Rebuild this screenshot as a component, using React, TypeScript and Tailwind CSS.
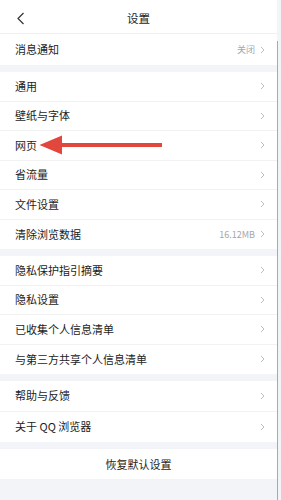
import React from 'react';

type Row = { label: string; value?: string };

const sections: Row[][] = [
  [{ label: '消息通知', value: '关闭' }],
  [
    { label: '通用' },
    { label: '壁纸与字体' },
    { label: '网页' },
    { label: '省流量' },
    { label: '文件设置' },
    { label: '清除浏览数据', value: '16.12MB' },
  ],
  [
    { label: '隐私保护指引摘要' },
    { label: '隐私设置' },
    { label: '已收集个人信息清单' },
    { label: '与第三方共享个人信息清单' },
  ],
  [{ label: '帮助与反馈' }, { label: '关于 QQ 浏览器' }],
];

const rowHeight = ['h-[31px]', 'h-[29.5px]', 'h-[29.5px]', 'h-[30.5px]'];

const Chevron = () => (
  <svg width="5" height="8" viewBox="0 0 5 8" fill="none" className="ml-[5px]">
    <path d="M1 1l3 3-3 3" stroke="#b5b5b5" strokeWidth="0.9" />
  </svg>
);

const Arrow = () => (
  <svg
    width="124"
    height="20"
    viewBox="0 0 124 20"
    className="absolute left-[39px] top-1/2 -translate-y-1/2"
  >
    <path d="M0.5 10L23 0.5v7.5h100v4H23v7.5z" fill="#e2473d" />
  </svg>
);

export default function App() {
  return (
    <div
      className="relative w-[281px] h-[500px] overflow-hidden bg-[#f3f4f8] text-[#1c1c1c]"
      style={{ fontFamily: '"Noto Sans CJK SC", "Noto Sans", sans-serif' }}
    >
      <div className="w-[277px]">
        <header className="relative h-[34px] pt-[4px] bg-white border-b border-[#eef0f3] flex items-center justify-center">
          <svg width="9" height="13" viewBox="0 0 9 13" fill="none" className="absolute left-[16px] top-[12px]">
            <path d="M7.5 1L2 6.5 7.5 12" stroke="#333" strokeWidth="1.2" />
          </svg>
          <span className="text-[11.5px] leading-none">设置</span>
        </header>

        <div className="flex flex-col gap-[7px]">
          {sections.map((rows, si) => (
            <div key={si} className="bg-white">
              {rows.map((row, ri) => (
                <div
                  key={row.label}
                  className={`relative flex items-center pl-[15px] pr-[12px] ${rowHeight[si]} ${
                    ri < rows.length - 1 ? 'border-b border-[#f1f2f4]' : ''
                  }`}
                >
                  <span className="text-[11px] flex-1 leading-none">{row.label}</span>
                  {row.value && <span className="text-[9px] text-[#a6a6a6] leading-none">{row.value}</span>}
                  <Chevron />
                  {row.label === '网页' && <Arrow />}
                </div>
              ))}
            </div>
          ))}
          <div className="bg-white h-[30px] flex items-center justify-center">
            <span className="text-[11px] leading-none">恢复默认设置</span>
          </div>
        </div>
      </div>

      <div className="absolute left-[276.5px] top-[41px] bottom-0 w-[1.5px] bg-[#a9a9a9]" />
    </div>
  );
}
